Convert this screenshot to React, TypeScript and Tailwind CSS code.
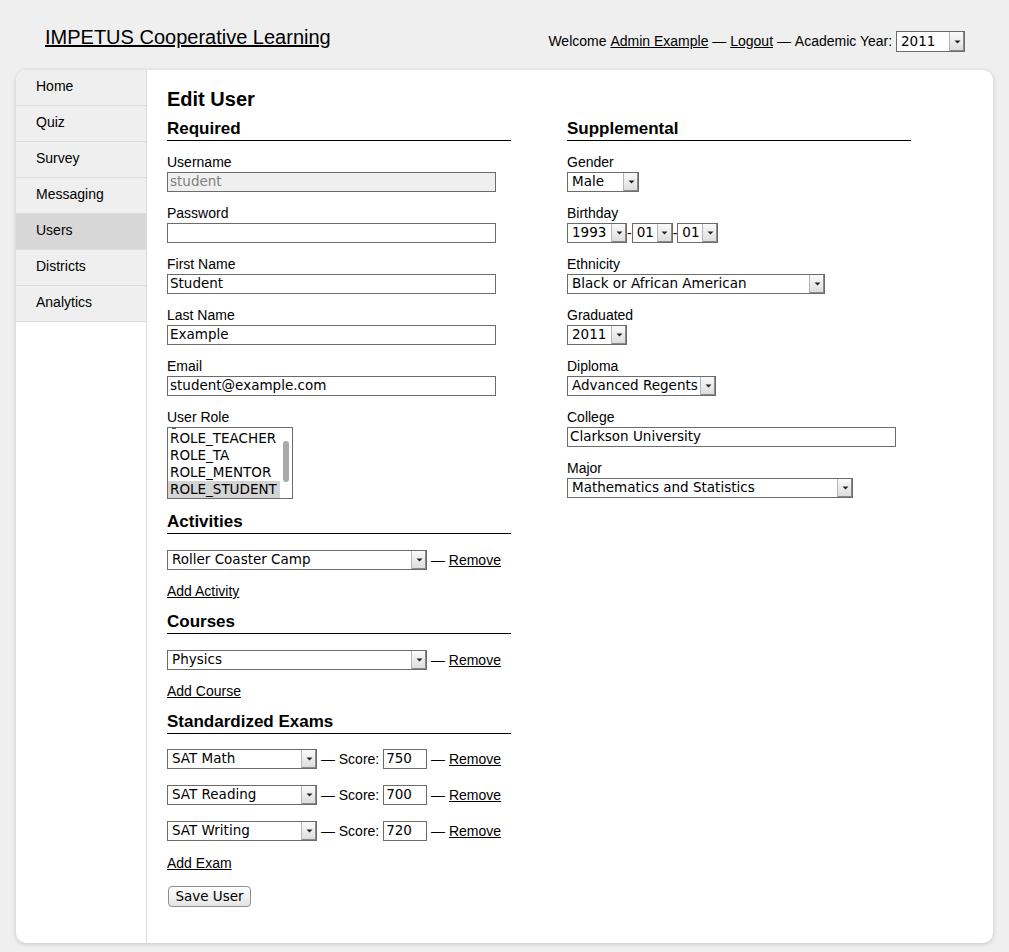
import React from "react";

const ctl = "[font-family:'DejaVu_Sans',sans-serif] text-[13.5px]";

function Arrow() {
  return (
    <span className="flex h-full w-[15px] shrink-0 items-center justify-center border-l border-[#b5b5b5] bg-gradient-to-b from-[#fafafa] to-[#dcdcdc] shadow-[inset_-1px_-1px_0_#8a8a8a]">
      <svg width="7" height="4" viewBox="0 0 7 4">
        <path d="M0.5 0.5 L6.5 0.5 L3.5 3.5 Z" fill="#222" />
      </svg>
    </span>
  );
}

function Sel({ w, v, h = "h-[20px]" }: { w: string; v: string; h?: string }) {
  return (
    <div className={`flex ${h} ${w} shrink-0 items-stretch border border-[#6b6b6b] bg-white text-black ${ctl}`}>
      <span className="flex flex-1 items-center overflow-hidden whitespace-nowrap pl-[4px] leading-none">{v}</span>
      <Arrow />
    </div>
  );
}

function Inp({ w, v, disabled }: { w: string; v?: string; disabled?: boolean }) {
  return (
    <div
      className={`flex h-[20px] ${w} shrink-0 items-center border border-[#6b6b6b] pl-[2px] leading-none ${ctl} ${
        disabled ? "bg-[#efefef] text-[#7f7f7f]" : "bg-white text-black"
      }`}
    >
      {v}
    </div>
  );
}

function Label({ children }: { children: React.ReactNode }) {
  return <div className="mb-[2px] text-[14px] leading-[16px]">{children}</div>;
}

function H2({ children, mt = "mt-[8px]" }: { children: React.ReactNode; mt?: string }) {
  return (
    <h2 className={`${mt} border-b border-black pb-[1px] text-[17px] font-bold leading-[20px]`}>{children}</h2>
  );
}

function A({ children }: { children: React.ReactNode }) {
  return <a className="cursor-pointer text-black underline">{children}</a>;
}

function Field({ label, children }: { label: string; children: React.ReactNode }) {
  return (
    <div className="mt-[13px]">
      <Label>{label}</Label>
      {children}
    </div>
  );
}

const nav = ["Home", "Quiz", "Survey", "Messaging", "Users", "Districts", "Analytics"];

export default function App() {
  return (
    <div className="flex h-[952px] flex-col bg-[#efefef] text-black [font-family:'Liberation_Sans',Arial,sans-serif]">
      <header className="flex h-[70px] shrink-0 justify-between pl-[45px] pr-[44px]">
        <a className="mt-[25px] cursor-pointer text-[20px] leading-[24px] text-black underline">
          IMPETUS Cooperative Learning
        </a>
        <div className="mt-[31px] flex h-[21px] items-center text-[14px] leading-[21px]">
          <span>Welcome&nbsp;</span>
          <A>Admin Example</A>
          <span>&nbsp;—&nbsp;</span>
          <A>Logout</A>
          <span>&nbsp;—&nbsp;Academic Year:&nbsp;</span>
          <Sel w="w-[69px]" v="2011" h="h-[21px]" />
        </div>
      </header>

      <div className="mx-[16px] mb-[9px] flex flex-1 overflow-hidden rounded-[10px] bg-white shadow-[0_1px_5px_rgba(0,0,0,0.18)]">
        <nav className="w-[131px] shrink-0 border-r border-[#dcdcdc]">
          {nav.map((n) => (
            <div
              key={n}
              className={`h-[36px] border-b border-[#dcdcdc] pl-[20px] pt-[8px] text-[14px] leading-[16px] ${
                n === "Users" ? "bg-[#d7d7d7]" : "bg-[#efefef]"
              }`}
            >
              {n}
            </div>
          ))}
        </nav>

        <main className="flex-1 pl-[20px] pt-[17px]">
          <h1 className="text-[20px] font-bold leading-[24px]">Edit User</h1>
          <div className="flex gap-[56px]">
            <div className="w-[344px]">
              <H2>Required</H2>
              <Field label="Username">
                <Inp w="w-[329px]" v="student" disabled />
              </Field>
              <Field label="Password">
                <Inp w="w-[329px]" />
              </Field>
              <Field label="First Name">
                <Inp w="w-[329px]" v="Student" />
              </Field>
              <Field label="Last Name">
                <Inp w="w-[329px]" v="Example" />
              </Field>
              <Field label="Email">
                <Inp w="w-[329px]" v="student@example.com" />
              </Field>
              <Field label="User Role">
                <div className={`relative h-[72px] w-[126px] overflow-hidden border border-[#6b6b6b] bg-white ${ctl}`}>
                  <div className="mr-[12px] pt-[2px]">
                    {["ROLE_TEACHER", "ROLE_TA", "ROLE_MENTOR", "ROLE_STUDENT"].map((r) => (
                      <div
                        key={r}
                        className={`h-[17px] whitespace-nowrap pl-[2px] leading-[17px] ${
                          r === "ROLE_STUDENT" ? "bg-[#d4d4d4]" : ""
                        }`}
                      >
                        {r}
                      </div>
                    ))}
                  </div>
                  <div className="absolute left-[4px] top-0 h-[1px] w-[4px] bg-[#555]" />
                  <div className="absolute right-[3px] top-[13px] h-[41px] w-[6px] rounded-full bg-[#a9a9a9]" />
                </div>
              </Field>

              <H2 mt="mt-[13px]">Activities</H2>
              <div className="mt-[16px] flex h-[20px] items-center text-[14px] leading-[20px]">
                <Sel w="w-[260px]" v="Roller Coaster Camp" />
                <span>&nbsp;—&nbsp;</span>
                <A>Remove</A>
              </div>
              <div className="mt-[13px] text-[14px] leading-[16px]">
                <A>Add Activity</A>
              </div>

              <H2 mt="mt-[13px]">Courses</H2>
              <div className="mt-[16px] flex h-[20px] items-center text-[14px] leading-[20px]">
                <Sel w="w-[260px]" v="Physics" />
                <span>&nbsp;—&nbsp;</span>
                <A>Remove</A>
              </div>
              <div className="mt-[13px] text-[14px] leading-[16px]">
                <A>Add Course</A>
              </div>

              <H2 mt="mt-[13px]">Standardized Exams</H2>
              {[
                ["SAT Math", "750"],
                ["SAT Reading", "700"],
                ["SAT Writing", "720"],
              ].map(([e, s], i) => (
                <div
                  key={e}
                  className={`${i === 0 ? "mt-[15px]" : "mt-[16px]"} flex h-[20px] items-center text-[14px] leading-[20px]`}
                >
                  <Sel w="w-[150px]" v={e} />
                  <span>&nbsp;—&nbsp;Score:&nbsp;</span>
                  <Inp w="w-[44px]" v={s} />
                  <span>&nbsp;—&nbsp;</span>
                  <A>Remove</A>
                </div>
              ))}
              <div className="mt-[14px] text-[14px] leading-[16px]">
                <A>Add Exam</A>
              </div>
              <button
                className={`ml-[1px] mt-[15px] block h-[21px] w-[83px] rounded-[4px] border border-[#8e8e8e] bg-gradient-to-b from-white to-[#e4e4e4] leading-none text-black ${ctl}`}
              >
                Save User
              </button>
            </div>

            <div className="w-[344px]">
              <H2>Supplemental</H2>
              <Field label="Gender">
                <Sel w="w-[72px]" v="Male" />
              </Field>
              <Field label="Birthday">
                <div className="flex h-[20px] items-center text-[14px] leading-[20px]">
                  <Sel w="w-[60px]" v="1993" />
                  <span>-</span>
                  <Sel w="w-[41px]" v="01" />
                  <span>-</span>
                  <Sel w="w-[41px]" v="01" />
                </div>
              </Field>
              <Field label="Ethnicity">
                <Sel w="w-[258px]" v="Black or African American" />
              </Field>
              <Field label="Graduated">
                <Sel w="w-[60px]" v="2011" />
              </Field>
              <Field label="Diploma">
                <Sel w="w-[149px]" v="Advanced Regents" />
              </Field>
              <Field label="College">
                <Inp w="w-[329px]" v="Clarkson University" />
              </Field>
              <Field label="Major">
                <Sel w="w-[286px]" v="Mathematics and Statistics" />
              </Field>
            </div>
          </div>
        </main>
      </div>
    </div>
  );
}
